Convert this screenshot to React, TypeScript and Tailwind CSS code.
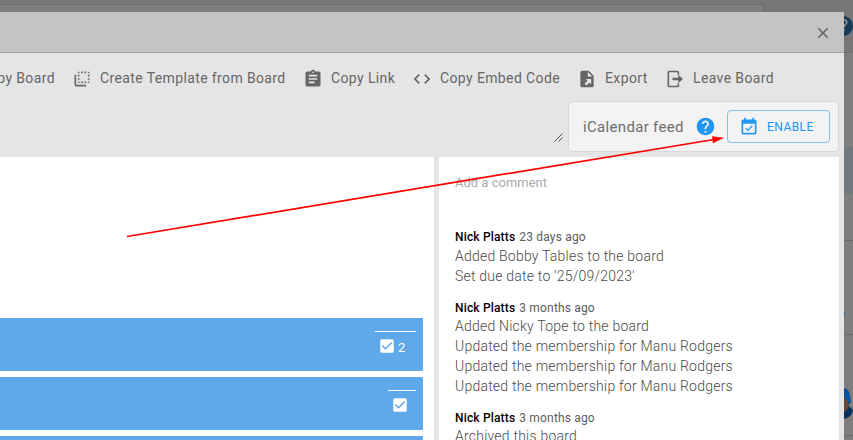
import type { ReactNode } from "react";
import { MdFlipToBack, MdAssignment, MdCode, MdHelp, MdClose, MdCheckBox, MdEventAvailable } from "react-icons/md";

function ExportIcon() {
  return (
    <svg viewBox="0 0 24 24" width="20" height="20" fill="currentColor" fillRule="evenodd">
      <path d="M6 2C4.900 2 4 2.900 4 4v16c0 1.100.9 2 2 2h12c1.100 0 2-.9 2-2V8l-6-6H6zm7 1.500L18.500 9H13V3.500zM10.500 12h6.500v6.500l-2.200-2.200-3.600 3.600-2.100-2.100 3.600-3.600z" />
    </svg>
  );
}

function LeaveIcon() {
  return (
    <svg viewBox="0 0 24 24" width="20" height="20" fill="currentColor">
      <path d="M5 2h10c1.100 0 2 .9 2 2v3h-2V4H5v16h10v-3h2v3c0 1.100-.9 2-2 2H5c-1.100 0-2-.9-2-2V4c0-1.100.9-2 2-2z" />
      <path d="M16 7l5.500 5-5.500 5v-3.500H9v-3h7z" />
    </svg>
  );
}

function Action({ icon, label, className }: { icon: ReactNode; label: string; className: string }) {
  return (
    <div className={`flex shrink-0 items-center gap-2 [&>svg]:relative [&>svg]:top-px ${className}`}>
      {icon}
      <span>{label}</span>
    </div>
  );
}

function Entry({ when, lines, className }: { when: string; lines: string[]; className: string }) {
  return (
    <article className={className}>
      <div className="flex h-[18px] gap-[4px] text-[12px] leading-[18px] tracking-[0.17px] text-[#5c5c5c]">
        <span className="font-medium text-black">Nick Platts</span>
        <span>{when}</span>
      </div>
      {lines.map((line, i) => (
        <p key={i} className="h-5 text-[14px] font-light leading-5 tracking-[0.22px] text-[#4a4a4a]">{line}</p>
      ))}
    </article>
  );
}

function Card({ count, className }: { count?: string; className: string }) {
  return (
    <div className="flex h-[53px] w-[423px] shrink-0 justify-end rounded-r-[1px] bg-[#5fa8e9] pr-[7px] text-white">
      <div className={`mt-[13px] flex h-[29px] items-center gap-[2px] border-t border-white ${className}`}>
        <MdCheckBox size={18} />
        {count && <span className="pt-[3px] text-[13px]">{count}</span>}
      </div>
    </div>
  );
}

export default function App() {
  return (
    <div className="relative flex h-[440px] w-[853px] flex-col overflow-hidden bg-[#7e7e7e] font-[Roboto,sans-serif]">
      <div className="flex h-3 shrink-0 flex-col bg-[#777]">
        <div className="mt-1 h-2 w-[764px] border-r border-t border-[#6b6b6b] bg-[#7e7e7e]" />
      </div>
      <div className="flex min-h-0 flex-1">
        <div className="flex w-[844px] shrink-0 flex-col bg-[#e5e5e5]">
          <header className="flex h-[41px] shrink-0 items-center justify-end border-b border-[#a0a0a0] bg-[#c4c4c4] pr-[12px] pt-[2px] text-[#616161]">
            <MdClose size={18} />
          </header>
          <nav className="flex h-[50px] shrink-0 items-center text-[14px] tracking-[0.38px] text-[#666]">
            <div className="flex w-[72px] shrink-0 justify-end whitespace-nowrap pr-[17px]">Copy Board</div>
            <Action className="w-[231px]" icon={<MdFlipToBack size={20} />} label="Create Template from Board" />
            <Action className="w-[109px]" icon={<MdAssignment size={20} />} label="Copy Link" />
            <Action className="w-[165px]" icon={<MdCode size={20} />} label="Copy Embed Code" />
            <Action className="w-[88px]" icon={<ExportIcon />} label="Export" />
            <Action className="w-[120px]" icon={<LeaveIcon />} label="Leave Board" />
          </nav>
          <div className="flex h-[54px] shrink-0 items-start justify-end pr-[5px]">
            <svg className="mr-[5px] mt-[30px]" width="9" height="9" viewBox="0 0 9 9" stroke="#444" strokeWidth="0.900">
              <path d="M.5 8.500l8-8M4.500 8.500l4-4" />
            </svg>
            <div className="-mt-[2px] flex h-[51px] w-[271px] items-center rounded-[4px] border border-[#d8d8d8] bg-[#f3f3f3] pl-[14px] pr-[8px]">
              <span className="w-[112px] whitespace-nowrap pt-[2px] text-[15px] tracking-[0.32px] text-[#6e6e6e]">iCalendar feed</span>
              <MdHelp size={21} color="#2196f3" />
              <button className="ml-auto flex h-[33px] w-[103px] items-center gap-[8px] rounded-[4px] border border-[#7fc0f7] pl-[11px] text-[12px] tracking-[0.45px] text-[#2196f3]">
                <MdEventAvailable size={20} />
                ENABLE
              </button>
            </div>
          </div>
          <main className="flex min-h-0 flex-1 gap-[5px]">
            <section className="flex w-[434px] shrink-0 flex-col gap-[6px] bg-white pt-[161px]">
              <Card count="2" className="w-[41px] pl-[3px]" />
              <Card className="w-[28px] pl-[3px]" />
              <Card className="w-[28px] pl-[3px]" />
            </section>
            <section className="w-[400px] shrink-0 bg-white pl-4 pt-[17px]">
              <div className="h-[18px] text-[13px] leading-[18px] text-[#aaa]">Add a comment</div>
              <Entry className="mt-[36px] h-[71px]" when="23 days ago" lines={["Added Bobby Tables to the board", "Set due date to '25/09/2023'"]} />
              <Entry className="h-[110px] [&>p]:relative [&>p]:-top-px" when="3 months ago" lines={["Added Nicky Tope to the board", "Updated the membership for Manu Rodgers", "Updated the membership for Manu Rodgers", "Updated the membership for Manu Rodgers"]} />
              <Entry className="[&>p]:relative [&>p]:-top-px" when="3 months ago" lines={["Archived this board"]} />
            </section>
          </main>
        </div>
        <aside className="relative w-[9px] overflow-hidden">
          <div className="h-[41px] border-b border-[#707070] bg-[#777]" />
          <div className="mt-[94px] h-[47px] bg-[#6f797e]" />
          <div className="mt-[46px] h-[95px] border-y border-[#6a6a6a]" />
          <div className="absolute left-[-11px] top-[4px] flex h-[20px] w-[20px] items-center justify-center rounded-full bg-[#173a56] pl-[2px] text-[17px] text-[#999]">?</div>
          <div className="absolute left-0 top-[300px] h-[5px] w-px bg-[#356e99]" />
          <svg className="absolute left-0 top-[375px]" width="9" height="34" viewBox="0 0 9 34">
            <path d="M0 20L5 19 9 23Q8 30 0 32Z" fill="#08305f" />
            <path d="M0 10L5 11 5 19 3 23 0 25Z" fill="#674739" />
            <path d="M0 1Q5 2 6 8L7 15 5 18 4 13 0 11Z" fill="#06539b" />
          </svg>
          <div className="absolute left-0 top-[423px] h-px w-full bg-[#6a6a6a]" />
        </aside>
      </div>
      <svg className="pointer-events-none absolute left-0 top-0" width="853" height="440" viewBox="0 0 853 440">
        <path d="M127 236.500L714 139.500" stroke="#f00" strokeWidth="1.700" />
        <path d="M724 137.700L713 143.200 712 136.200Z" fill="#f00" />
      </svg>
    </div>
  );
}
